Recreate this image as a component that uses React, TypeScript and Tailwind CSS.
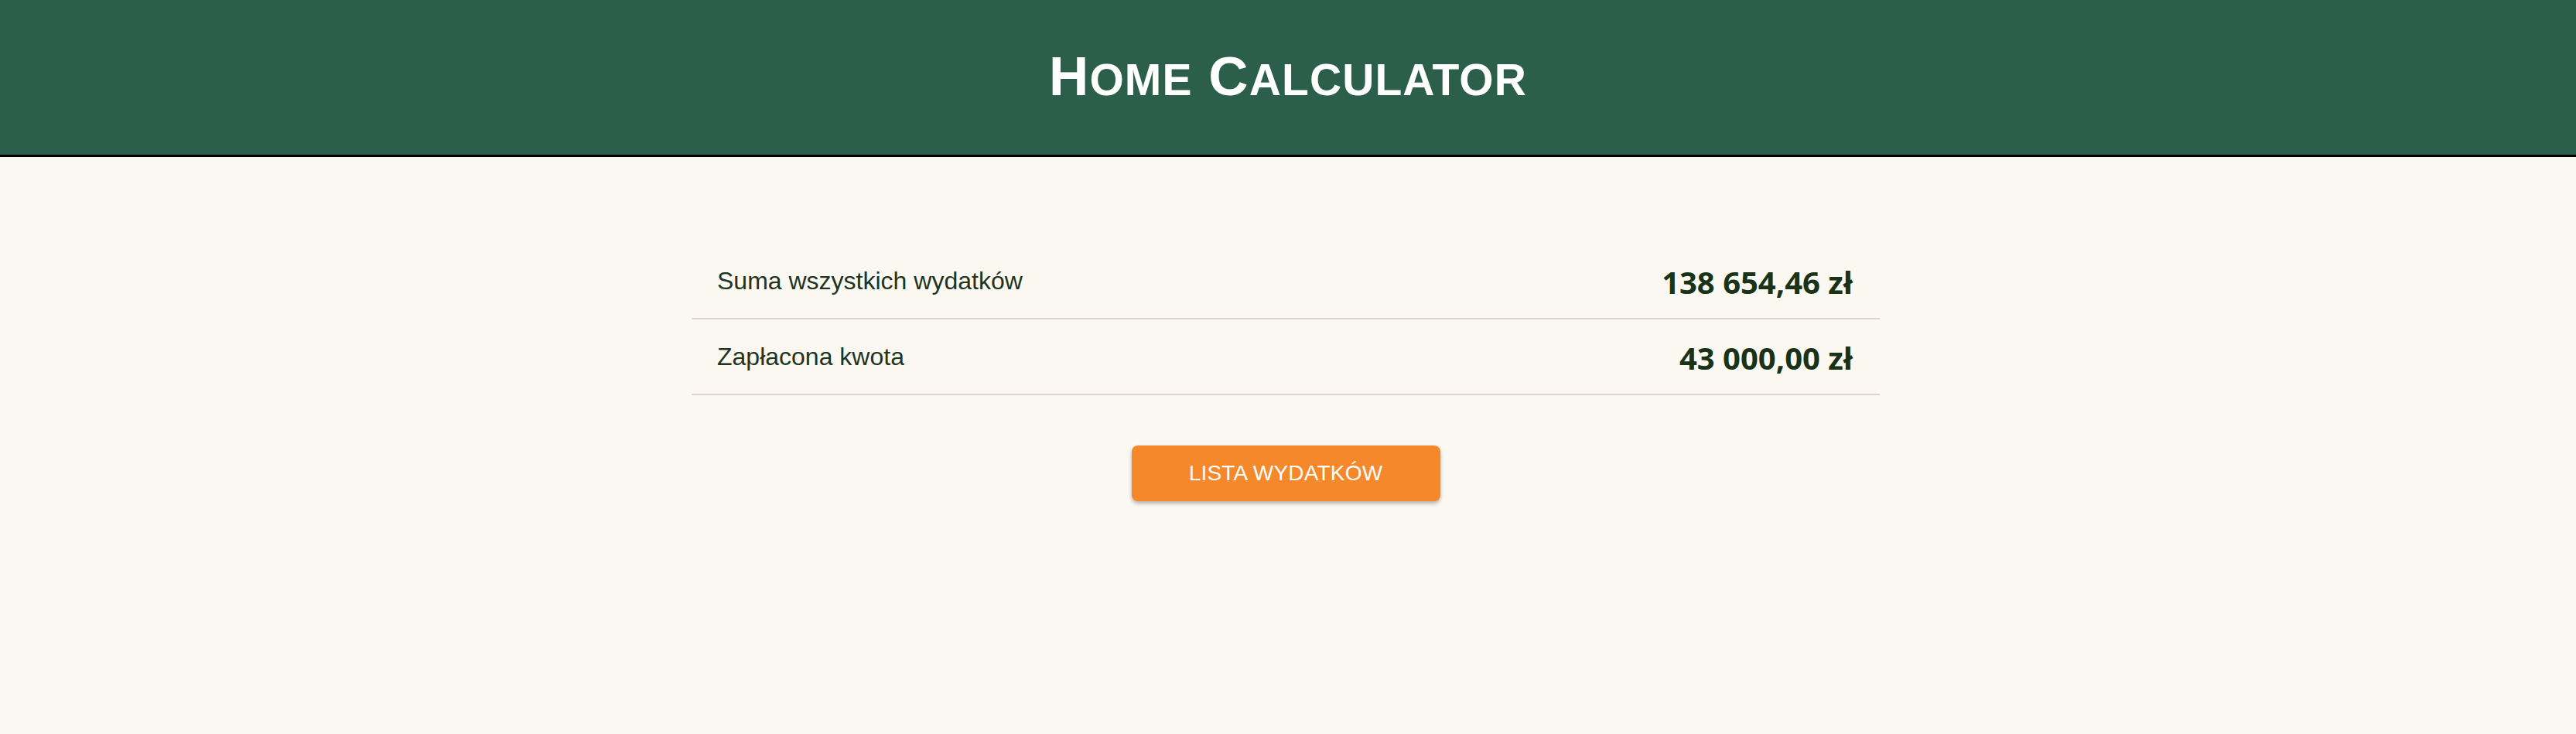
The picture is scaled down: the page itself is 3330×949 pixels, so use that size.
const summary = [
  { label: 'Suma wszystkich wydatków', value: '138 654,46 zł' },
  { label: 'Zapłacona kwota', value: '43 000,00 zł' },
]

function Title() {
  return (
    <h1 className="pb-[4px] font-['Liberation_Sans',Arial,sans-serif] text-[71px] font-bold leading-none tracking-[1.1px] text-white">
      H<span className="text-[57px] uppercase">ome</span> C
      <span className="text-[57px] uppercase">alculator</span>
    </h1>
  )
}

export default function App() {
  return (
    <div className="min-h-screen bg-[#fbf7f1]">
      <header className="flex h-[203px] items-center justify-center border-b-[3px] border-black bg-[#2b5f4c]">
        <Title />
      </header>

      <main className="flex flex-col items-center pt-[112px] pr-[6px]">
        <div className="w-[1536px]">
          {summary.map((row) => (
            <div
              key={row.label}
              className="flex h-[98px] items-center justify-between border-b-2 border-[#dbd5ce] pl-[33px] pr-[35px]"
            >
              <span className="font-['Liberation_Sans',Arial,sans-serif] text-[32px] text-[#1d3522]">
                {row.label}
              </span>
              <span className="pt-[4px] font-['Open_Sans',sans-serif] text-[40px] font-bold text-[#183318]">
                {row.value}
              </span>
            </div>
          ))}
        </div>

        <button
          type="button"
          className="mt-[65px] flex h-[72px] w-[399px] items-center justify-center rounded-[8px] bg-[#f5882b] font-['Liberation_Sans',Arial,sans-serif] text-[28px] tracking-[0.2px] text-white uppercase shadow-[0_3px_5px_rgba(0,0,0,0.28)]"
        >
          Lista wydatków
        </button>
      </main>
    </div>
  )
}
